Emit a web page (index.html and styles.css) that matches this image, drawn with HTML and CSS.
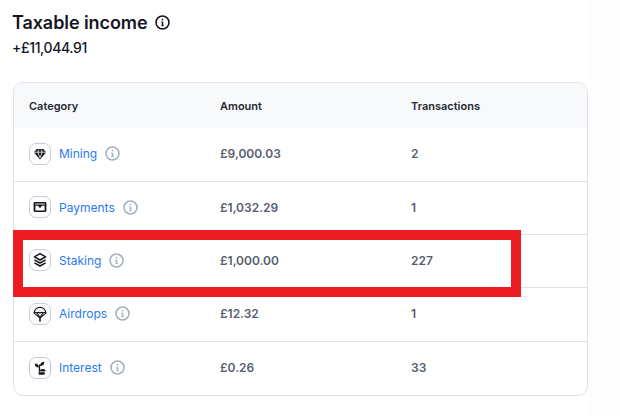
FILE: index.html
```html
<!DOCTYPE html>
<html lang="en">
<head>
<meta charset="utf-8">
<title>Taxable income</title>
<link rel="stylesheet" href="styles.css">
</head>
<body>
<svg class="defs" width="0" height="0" aria-hidden="true">
  <symbol id="info" viewBox="0 0 16 16">
    <circle cx="8" cy="8" r="6.9" fill="none" stroke="currentColor" stroke-width="1.7"/>
    <circle cx="8" cy="4.9" r="1" fill="currentColor"/>
    <path d="M8 7.4v4" fill="none" stroke="currentColor" stroke-width="1.7"/>
    <path d="M6.7 7.4H8M6.700 11.400h2.600" fill="none" stroke="currentColor" stroke-width="1"/>
  </symbol>
</svg>
<main class="page">
  <div class="title-row">
    <h1 class="title">Taxable income</h1>
    <svg class="title-info"><use href="#info"/></svg>
  </div>
  <p class="total">+£11,044.91</p>
  <section class="table">
    <div class="row head">
      <span>Category</span><span>Amount</span><span>Transactions</span>
    </div>
    <div class="row">
      <div class="cat">
        <span class="chip"><svg viewBox="0 0 16 16"><path d="M4.800 3h6.400l3 3.200L8 13.400 1.800 6.200z" fill="#14161f"/><path d="M2 6.200h12M5.800 6.200 8 11.800 10.200 6.200M5.800 6.200l1-2.600M10.200 6.200l-1-2.600" fill="none" stroke="#fff" stroke-width=".8"/></svg></span>
        <a class="link" href="#">Mining</a>
        <svg class="info"><use href="#info"/></svg>
      </div>
      <span class="val">£9,000.03</span><span class="val">2</span>
    </div>
    <div class="row">
      <div class="cat">
        <span class="chip"><svg viewBox="0 0 16 16"><rect x="1.600" y="3" width="12.800" height="10" rx="1.400" fill="#14161f"/><path d="M3.200 5h9.600" stroke="#fff" stroke-width=".9"/><path d="M3.400 6.800h2.800L8 8.800l1.800-2H12.600v4.600H3.400z" fill="#fff"/><path d="M6 6.800 8 9l2-2.200z" fill="#14161f"/></svg></span>
        <a class="link" href="#">Payments</a>
        <svg class="info"><use href="#info"/></svg>
      </div>
      <span class="val">£1,032.29</span><span class="val">1</span>
    </div>
    <div class="row">
      <div class="cat">
        <span class="chip"><svg viewBox="0 0 16 16"><g fill="none" stroke="#14161f" stroke-width="1.500" stroke-linejoin="round"><path d="M8 1.600 13.600 4.800 8 8 2.400 4.800z"/><path d="M2.400 7.800 8 11l5.600-3.200"/><path d="M2.400 10.800 8 14l5.600-3.200"/></g></svg></span>
        <a class="link" href="#">Staking</a>
        <svg class="info"><use href="#info"/></svg>
      </div>
      <span class="val">£1,000.00</span><span class="val">227</span>
    </div>
    <div class="row">
      <div class="cat">
        <span class="chip"><svg viewBox="0 0 16 16"><g fill="none" stroke="#14161f" stroke-width="1.100" stroke-linejoin="round"><path d="M2 7a6 5.600 0 0 1 12 0c-1-.8-2-.8-3 0-1-.8-2-.8-3 0-1-.8-2-.8-3 0-1-.8-2-.8-3 0z"/><path d="M2.200 7.400 8 11.800 13.800 7.400M5.200 7 8 11.800 10.800 7"/></g><path d="M8 11v4.400" stroke="#14161f" stroke-width="1.600"/></svg></span>
        <a class="link" href="#">Airdrops</a>
        <svg class="info"><use href="#info"/></svg>
      </div>
      <span class="val">£12.32</span><span class="val">1</span>
    </div>
    <div class="row">
      <div class="cat">
        <span class="chip"><svg viewBox="0 0 16 16"><g fill="#14161f"><path d="M6.800 7.400C4.200 7.400 2.800 6 2.800 3.400c2.600 0 4 1.400 4 4z"/><path d="M8 6c0-2.600 1.400-4.200 4.400-4.200C12.400 4.600 10.800 6 8 6z"/><rect x="6.800" y="4.500" width="1.300" height="10"/><ellipse cx="10.800" cy="10.600" rx="2.900" ry="1.500"/><ellipse cx="9.800" cy="13.200" rx="3.200" ry="1.500"/></g><path d="M7.600 11.800h6" stroke="#fff" stroke-width=".7"/></svg></span>
        <a class="link" href="#">Interest</a>
        <svg class="info"><use href="#info"/></svg>
      </div>
      <span class="val">£0.26</span><span class="val">33</span>
    </div>
  </section>
  <div class="highlight"></div>
</main>
</body>
</html>
```
FILE: styles.css
```css
* { box-sizing: border-box; }
html, body { margin: 0; height: 100%; }
body {
  background: linear-gradient(90deg, #fff 590px, #fdfdfe 590px);
  font-family: Inter, "Liberation Sans", sans-serif;
  color: #14161f;
  overflow: hidden;
}
.defs { position: absolute; }
.page {
  position: relative;
  width: 588px;
  height: 416px;
  padding: 12px 0 0 13px;
}
.title-row { display: flex; align-items: center; gap: 8px; height: 21px; margin-left: -1px; }
.title { margin: 0; font-size: 18px; font-weight: 600; line-height: 21px; letter-spacing: -.08px; }
.title-info { width: 15px; height: 15px; color: #14161f; }
.total { margin: 5px 0 0 -1px; font-size: 14px; font-weight: 500; line-height: 20px; letter-spacing: -.4px; }
.table {
  margin-top: 24px;
  height: 314px;
  border: 1px solid #dfe1e8;
  border-radius: 10px;
  overflow: hidden;
}
.row {
  display: grid;
  grid-template-columns: 191px 191px 1fr;
  align-items: center;
  padding: 0 0 1.6px 15px;
  height: 53.4px;
  border-bottom: 1px solid #dfe1e8;
  font-size: 11px;
}
.row:last-child { border-bottom: 0; }
.head {
  height: 45.3px;
  padding-bottom: 0;
  background: #f8f9fb;
  border-bottom: 0;
  font-weight: 600;
  color: #262935;
}
.cat { display: flex; align-items: center; }
.chip {
  display: flex;
  align-items: center;
  justify-content: center;
  width: 22px;
  height: 22px;
  border: 1px solid #c4cbd9;
  border-radius: 7px;
  background: #fff;
}
.chip svg { width: 16px; height: 16px; flex: none; }
.link {
  margin-left: 8px;
  font-size: 12px;
  color: #2979f5;
  text-decoration: none;
}
.info { width: 15px; height: 15px; margin-left: 8px; color: #a5b0c3; }
.val { font-size: 12px; font-weight: 600; color: #585e70; }
.highlight {
  position: absolute;
  left: 13px;
  top: 230px;
  width: 508px;
  height: 67px;
  border: 10px solid #ed1c24;
}
```
